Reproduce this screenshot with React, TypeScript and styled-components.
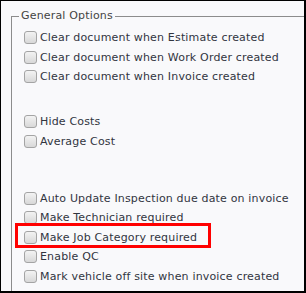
import React from "react";
import styled, { createGlobalStyle } from "styled-components";

const Global = createGlobalStyle`
  html, body { margin: 0; padding: 0; background: #ffffff; }
  body { font-family: "DejaVu Sans", Verdana, sans-serif; }
`;

const Frame = styled.div`
  box-sizing: border-box;
  width: 306px;
  height: 293px;
  border-style: solid;
  border-color: #000;
  border-width: 1px 2px 2px 1px;
  background: #f9f9fb;
  overflow: hidden;
  padding: 8px 0 0 10px;
`;

const Fieldset = styled.fieldset`
  box-sizing: border-box;
  width: 340px;
  height: 320px;
  margin: 0;
  border: 1px solid #8c8c8c;
  padding: 5px 0 0 7px;
`;

const Legend = styled.legend`
  font-size: 11px;
  letter-spacing: 0.17px;
  color: #444;
  padding: 0 2px;
  line-height: 14px;
`;

const List = styled.div`
  display: flex;
  flex-direction: column;
  margin-left: 5px;
`;

const Row = styled.label<{ $gapBefore?: number }>`
  position: relative;
  display: flex;
  align-items: center;
  height: 19.5px;
  margin-top: ${(p) => p.$gapBefore ?? 0}px;
  font-size: 11px;
  letter-spacing: 0.17px;
  color: #31353f;
  white-space: nowrap;
`;

const Box = styled.input.attrs({ type: "checkbox" })`
  appearance: none;
  box-sizing: border-box;
  width: 13px;
  height: 13px;
  margin: 0 3px 0 0;
  border: 1px solid #a4a4a4;
  border-radius: 3px;
  background: linear-gradient(#f3f3f3, #d8d8d8);
  flex: none;
`;

const Highlight = styled.span`
  position: absolute;
  left: -9px;
  top: -5px;
  width: 196px;
  height: 25px;
  box-sizing: border-box;
  border: 3px solid #ff0000;
  pointer-events: none;
`;

type Item = { text: string; gap?: number; mark?: boolean };

const items: Item[] = [
  { text: "Clear document when Estimate created" },
  { text: "Clear document when Work Order created" },
  { text: "Clear document when Invoice created" },
  { text: "Hide Costs", gap: 25.5 },
  { text: "Average Cost" },
  { text: "Auto Update Inspection due date on invoice", gap: 37.5 },
  { text: "Make Technician required" },
  { text: "Make Job Category required", mark: true },
  { text: "Enable QC" },
  { text: "Mark vehicle off site when invoice created" },
];

export default function App() {
  return (
    <>
      <Global />
      <Frame>
        <Fieldset>
          <Legend>General Options</Legend>
          <List>
            {items.map((it) => (
              <Row key={it.text} $gapBefore={it.gap}>
                <Box />
                {it.text}
                {it.mark && <Highlight />}
              </Row>
            ))}
          </List>
        </Fieldset>
      </Frame>
    </>
  );
}
